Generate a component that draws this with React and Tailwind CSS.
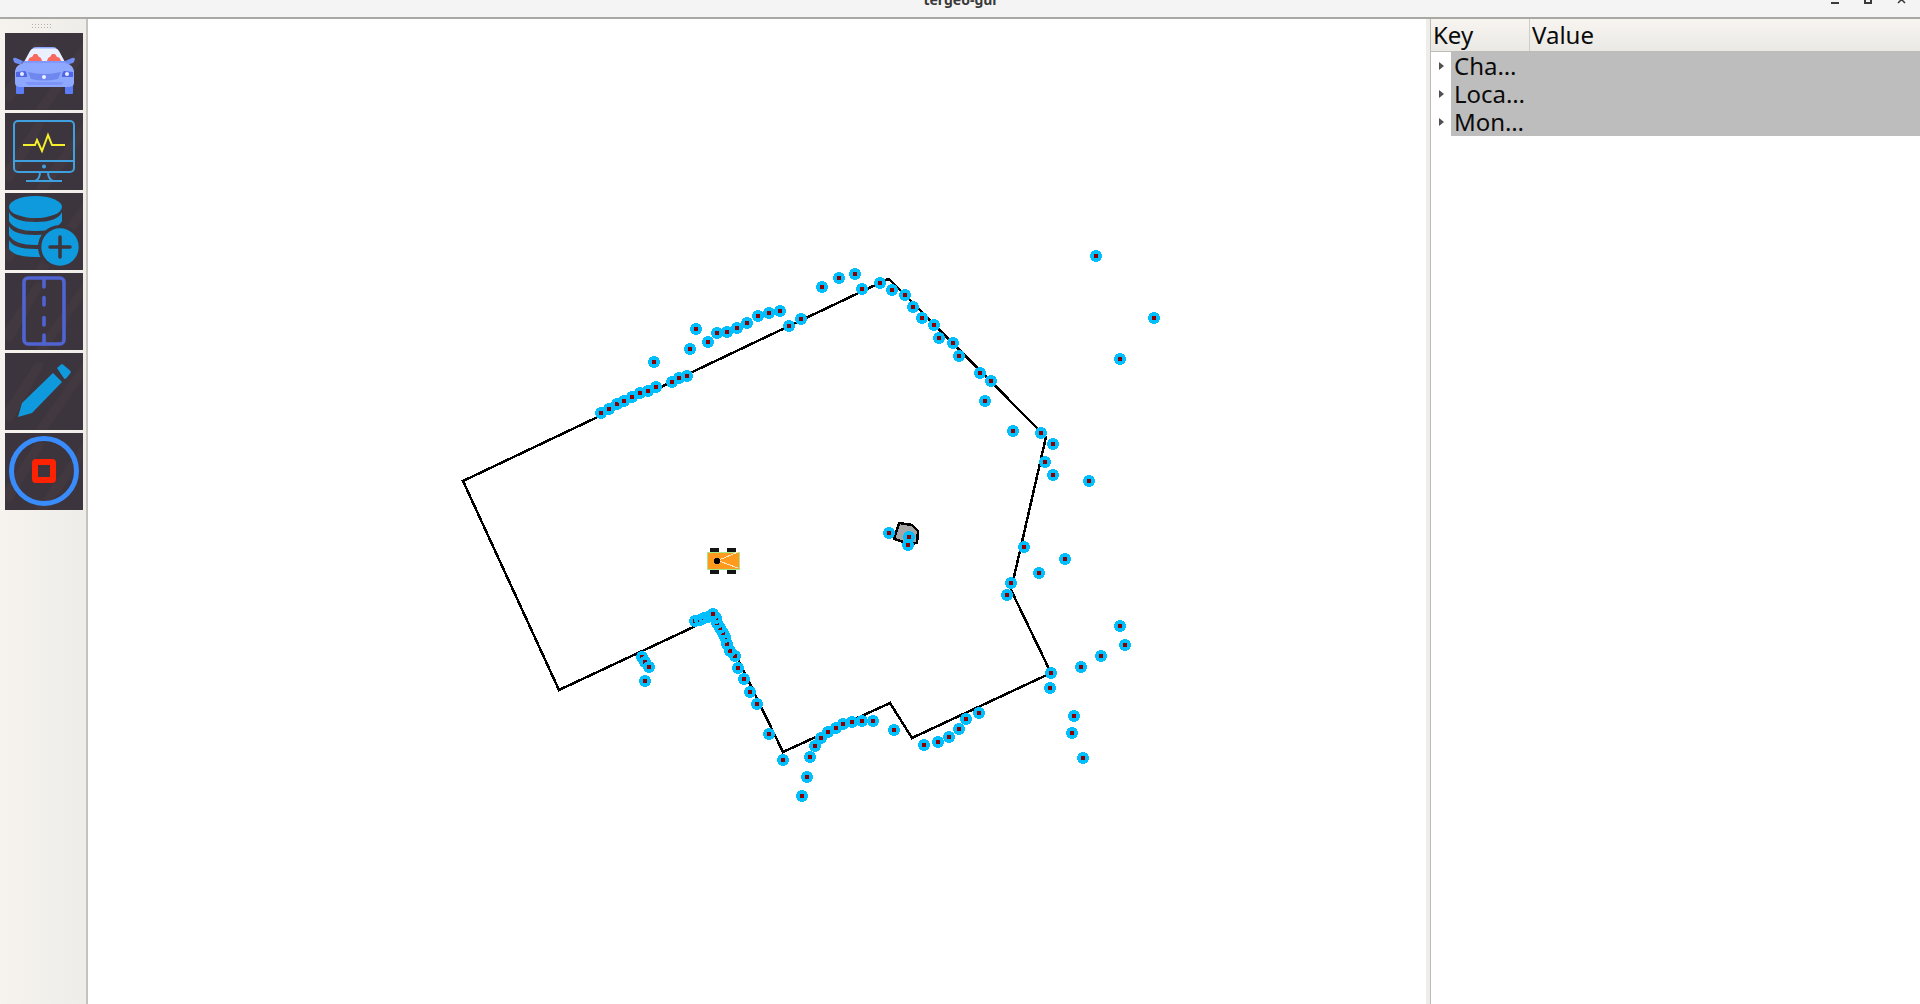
const pts = [[601,413],[609,409],[617,404],[624,401],[632,397],[640,393],[648,391],[656,387],[672,382],[679,378],[687,376],[654,362],[690,349],[696,329],[708,342],[717,333],[727,332],[737,328],[747,323],[758,316],[769,313],[780,311],[789,326],[801,319],[822,287],[839,278],[855,274],[862,289],[880,283],[892,290],[905,295],[913,307],[922,318],[934,325],[939,338],[953,343],[959,356],[980,373],[991,381],[985,401],[1013,431],[1041,433],[1053,444],[1096,256],[1154,318],[1120,359],[1045,462],[1053,475],[1089,481],[1024,547],[1065,559],[1039,573],[1011,583],[1007,595],[1120,626],[1125,645],[1101,656],[1081,667],[1051,673],[1050,688],[1074,716],[1072,733],[1083,758],[783,760],[810,757],[807,777],[802,796],[815,746],[821,738],[828,732],[836,728],[843,724],[852,722],[862,721],[873,721],[894,730],[924,745],[938,742],[949,737],[959,729],[966,719],[979,713],[642,657],[645,662],[649,667],[645,681],[769,734],[757,704],[750,692],[744,679],[738,668],[735,656],[730,651],[727,644],[725,637],[723,633],[720,628],[717,623],[716,618],[695,621],[700,620],[704,618],[708,617],[711,616],[713,614],[889,533],[909,537],[908,545]];
const OX = 88, OY = 19;
const wall = [[463,481],[888,279],[890,280],[1046,437],[1011,590],[1051,673],[912,738],[890,703],[783,752],[717,616],[559,690]];
const toPts = (a) => a.map(([x, y]) => `${x - OX},${y - OY}`).join(' ');

function Streaks() {
  return (
    <svg className="absolute inset-0 h-full w-full" viewBox="0 0 78 77" aria-hidden="true">
      <path d="M-4 62 L30 10 L40 10 L6 70 Z M30 77 L78 10 L78 26 L42 77 Z" fill="#4a3f48" opacity="0.35" />
    </svg>
  );
}

function ToolButton({ children }) {
  return (
    <div className="relative h-[77px] w-[78px] shrink-0 overflow-hidden bg-[#3d353d]">
      <Streaks />
      <svg className="absolute inset-0 h-full w-full" viewBox="0 0 78 77">{children}</svg>
    </div>
  );
}

function Car() {
  return (
    <>
      <rect x="11" y="48" width="8" height="13" rx="1" fill="#5d7cf8" />
      <rect x="60" y="48" width="8" height="13" rx="1" fill="#5d7cf8" />
      <path d="M8 26 Q9 24 11 25 L18 28 L16 31 Q11 31 9 29 Z M70 26 Q69 24 67 25 L60 28 L62 31 Q67 31 69 29 Z" fill="#6f8df5" />
      <path d="M10 38 Q11 32 18 30 L21 28 L27 16 Q28 14 31 14 L48 14 Q51 14 52 16 L58 28 L61 30 Q68 32 69 38 L69 50 Q69 54 63 54 L16 54 Q10 54 10 50 Z" fill="#8fa8ff" />
      <path d="M19 29 L25 18 Q26 15.500 29 15.500 L50 15.500 Q53 15.500 54 18 L60 29 Z" fill="#eaf0ff" />
      <path d="M23 28 Q24 24 27 24 L29 21 L32 21 L34 24 Q36 24 37 28 Z M42 28 Q43 24 45 24 L47 21 L50 21 L52 24 Q55 24 56 28 Z" fill="#f8685f" />
      <path d="M19 28 H60 L62 30 H17 Z" fill="#7f98fb" />
      <path d="M11 39 L20 38 Q22 39 22 44 L11 44 Z M68 39 L59 38 Q57 39 57 44 L68 44 Z" fill="#4f66e6" />
      <circle cx="17" cy="41" r="2" fill="#e9edff" />
      <circle cx="62" cy="41" r="2" fill="#e9edff" />
      <path d="M23 39 Q39 43 56 39 L53 46 Q39 49 26 46 Z" fill="#6f88f0" />
      <circle cx="39" cy="44" r="2" fill="#eef1ff" />
      <path d="M20 49 L59 49 L56 52 L23 52 Z" fill="#7c95f6" />
    </>
  );
}

function Monitor() {
  return (
    <g fill="none" stroke="#3fa0e0" strokeWidth="2">
      <rect x="9" y="8" width="60" height="51" rx="4" />
      <path d="M9 48 H69" />
      <path d="M35 59 Q35 66 30 68 M43 59 Q43 66 48 68 M21 68 H57" />
      <circle cx="39" cy="53.500" r="1" fill="#3fa0e0" />
      <path d="M18 32 H30 L32 27 L37 38 L43 22 L47 32 H60" stroke="#f6f02a" />
    </g>
  );
}

function Database() {
  return (
    <>
      <ellipse cx="30.500" cy="14" rx="26.500" ry="11" fill="#109ade" />
      <path d="M4 19 Q8 29 30.500 29 Q53 29 57 19 V28 Q52 38 30.500 38 Q9 38 4 28 Z" fill="#109ade" />
      <path d="M4 33 Q8 42 30.500 42 Q46 42 52 39 L42 51 Q36 52 30.500 52 Q9 52 4 42 Z" fill="#109ade" />
      <path d="M4 47 Q8 56 30.500 56 L35 56 L36 64 L30.500 64 Q9 64 4 56 Z" fill="#109ade" />
      <circle cx="55" cy="54" r="22" fill="#3d353d" />
      <circle cx="55" cy="54" r="18.700" fill="#109ade" />
      <path d="M45 54 H65 M55 44 V64" stroke="#3d353d" strokeWidth="3.500" strokeLinecap="round" />
    </>
  );
}

function Road() {
  return (
    <g fill="none" stroke="#4f63d2" strokeWidth="3.600">
      <rect x="19" y="5" width="40" height="66" rx="4" />
      <path d="M39 5 V14 M39 24.500 V32 M39 44.500 V52 M39 62 V71" strokeLinecap="round" />
    </g>
  );
}

function Pen() {
  return (
    <>
      <path d="M13 64 L17 50 L48 20 L57 29 L27 60 Z" fill="#109ade" />
      <path d="M52 15 L56 11.500 Q57 11 58 11.500 L65.500 18 Q66 19 65.500 20 L61 25.500 Q60 26 59 25.500 Z" fill="#109ade" />
    </>
  );
}

function Stop() {
  return (
    <>
      <circle cx="39" cy="38" r="32.500" fill="none" stroke="#398cfb" strokeWidth="5" />
      <rect x="30" y="29" width="18" height="18" rx="1" fill="none" stroke="#ff2200" strokeWidth="6" />
    </>
  );
}

function Handle() {
  return (
    <div className="flex h-[14px] w-full flex-col items-center justify-center gap-[2px]">
      {[0, 1].map((r) => (
        <div key={r} className="flex gap-[2px]">
          {[0, 1, 2, 3, 4, 5, 6].map((c) => (
            <div key={c} className="h-[1px] w-[1px] bg-[#b5b1aa]" />
          ))}
        </div>
      ))}
    </div>
  );
}

function MapView() {
  return (
    <svg className="block h-full w-full" viewBox="0 0 1338 985" shapeRendering="crispEdges" aria-label="map">
      <polygon points={toPts(wall)} fill="none" stroke="#000" strokeWidth="2.500" />
      <polygon points={toPts([[899,523],[912,525],[918,531],[917,543],[910,544],[894,539]])} fill="#a6a6a6" stroke="#000" strokeWidth="2.500" />
      {pts.map(([x, y], i) => (
        <g key={i}>
          <circle cx={x - OX} cy={y - OY} r="6" fill="#00bfff" />
          <rect x={x - OX - 2} y={y - OY - 2} width="4" height="4" fill="#8b0000" />
        </g>
      ))}
      <g transform={`translate(${-OX} ${-OY})`}>
        <rect x="710" y="548" width="9" height="4" fill="#141414" />
        <rect x="727" y="548" width="9" height="4" fill="#141414" />
        <rect x="710" y="569" width="9" height="5" fill="#141414" />
        <rect x="727" y="569" width="9" height="5" fill="#141414" />
        <rect x="707" y="552" width="32" height="17" fill="#ff9a1f" stroke="#a8e88a" strokeWidth="1" />
        <path d="M719 560 L738 552 M719 561 L738 568" stroke="#ffe7c0" strokeWidth="1" fill="none" />
        <circle cx="717" cy="561" r="3" fill="#000" />
      </g>
    </svg>
  );
}

function TreeRow({ label }) {
  return (
    <div className="flex h-[28px] items-center">
      <div className="flex h-full w-[20px] shrink-0 items-center justify-center bg-white">
        <div className="h-0 w-0 border-y-[4px] border-l-[5px] border-y-transparent border-l-[#505050]" />
      </div>
      <div className="flex h-full flex-1 items-center bg-[#bdbdbd] pl-[3px] text-[24px] leading-[28px] text-[#0b0b0b]">{label}</div>
    </div>
  );
}

export default function App() {
  return (
    <div className="flex h-[1004px] w-[1920px] flex-col overflow-hidden bg-white font-['Noto_Sans',sans-serif]">
      <div className="relative flex h-[19px] shrink-0 items-start justify-center overflow-hidden border-b-2 border-[#a9a8a3] bg-[#f4f4f4]">
        <span className="mt-[-10px] text-[14px] font-bold leading-[20px] text-[#3a3a3a]">tergeo-gui</span>
        <div className="absolute right-[14px] top-[-5px] flex items-center gap-[25px] text-[#3a3a3a]">
          <div className="mt-[6px] h-[2px] w-[8px] bg-[#3a3a3a]" />
          <div className="h-[9px] w-[8px] border-2 border-[#3a3a3a]" />
          <svg className="h-[9px] w-[9px]" viewBox="0 0 9 9"><path d="M1 1 L8 8 M8 1 L1 8" stroke="#3a3a3a" strokeWidth="1.500" /></svg>
        </div>
      </div>
      <div className="flex min-h-0 flex-1">
        <div className="flex w-[88px] shrink-0 flex-col border-r-2 border-[#c6c3be] bg-gradient-to-r from-[#f6f3ee] to-[#efede9] pl-[5px] pr-[3px]">
          <div className="-ml-[5px]"><Handle /></div>
          <div className="flex flex-col gap-[3px]">
            <ToolButton><Car /></ToolButton>
            <ToolButton><Monitor /></ToolButton>
            <ToolButton><Database /></ToolButton>
            <ToolButton><Road /></ToolButton>
            <ToolButton><Pen /></ToolButton>
            <ToolButton><Stop /></ToolButton>
          </div>
        </div>
        <div className="min-w-0 flex-1 bg-white"><MapView /></div>
        <div className="w-[4px] shrink-0 bg-[#efedea]" />
        <div className="flex w-[490px] shrink-0 flex-col border-l border-[#bdbbb6] bg-white">
          <div className="flex h-[33px] shrink-0 border-b border-[#bdbbb6] bg-gradient-to-b from-[#f8f5f1] to-[#ebe9e5] text-[24px] leading-[32px] text-[#0b0b0b]">
            <div className="flex w-[99px] items-center border-r border-[#cfcdc8] pl-[2px]">Key</div>
            <div className="flex items-center pl-[2px]">Value</div>
          </div>
          <TreeRow label="Cha…" />
          <TreeRow label="Loca…" />
          <TreeRow label="Mon…" />
        </div>
      </div>
    </div>
  );
}
